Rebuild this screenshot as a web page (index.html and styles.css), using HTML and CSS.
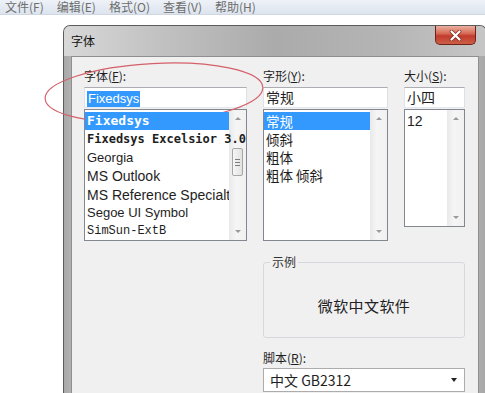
FILE: index.html
```html
<!DOCTYPE html>
<html lang="zh-CN">
<head>
    <meta charset="UTF-8">
    <meta name="viewport" content="width=device-width, initial-scale=1.0">
    <title>字体</title>
    <link rel="stylesheet" href="styles.css">
</head>
<body>
    <div class="menubar">
        <span>文件(F)</span>
        <span>编辑(E)</span>
        <span>格式(O)</span>
        <span>查看(V)</span>
        <span>帮助(H)</span>
    </div>

    <div class="editor">
        <div class="dialog">
            <div class="titlebar">
                <span class="title">字体</span>
                <button class="close">
                    <svg width="13" height="11" viewBox="0 0 13 11">
                        <path d="M2.5 1.5 L10.5 9.5 M10.5 1.5 L2.5 9.5" stroke="#7b2a1f" stroke-width="3.6" stroke-linecap="round"/>
                        <path d="M2.5 1.5 L10.5 9.5 M10.5 1.5 L2.5 9.5" stroke="#fff" stroke-width="2.2" stroke-linecap="round"/>
                    </svg>
                </button>
            </div>

            <div class="body">
                <div class="grid">
                    <label class="lbl">字体(<u>F</u>):</label>
                    <label class="lbl">字形(<u>Y</u>):</label>
                    <label class="lbl">大小(<u>S</u>):</label>

                    <div class="input"><span class="sel-text">Fixedsys</span></div>
                    <div class="input">常规</div>
                    <div class="input">小四</div>

                    <div class="list list-font">
                        <ul class="items">
                            <li class="sel f-fixed">Fixedsys</li>
                            <li class="f-excel">Fixedsys Excelsior 3.01</li>
                            <li class="f-sans f-small">Georgia</li>
                            <li class="f-sans">MS Outlook</li>
                            <li class="f-sans">MS Reference Specialty</li>
                            <li class="f-sans f-small">Segoe UI Symbol</li>
                            <li class="f-simsun">SimSun-ExtB</li>
                        </ul>
                        <div class="scroll">
                            <div class="btn"><i class="arr-up"></i></div>
                            <div class="track"><div class="thumb"><i class="grip"></i></div></div>
                            <div class="btn"><i class="arr-down"></i></div>
                        </div>
                    </div>

                    <div class="list list-style">
                        <ul class="items">
                            <li class="sel">常规</li>
                            <li>倾斜</li>
                            <li>粗体</li>
                            <li>粗体 倾斜</li>
                        </ul>
                        <div class="scroll">
                            <div class="btn"><i class="arr-up"></i></div>
                            <div class="track"></div>
                            <div class="btn"><i class="arr-down"></i></div>
                        </div>
                    </div>

                    <div class="list list-size">
                        <ul class="items">
                            <li class="f-sans">12</li>
                        </ul>
                        <div class="scroll">
                            <div class="btn"><i class="arr-up"></i></div>
                            <div class="track"></div>
                            <div class="btn"><i class="arr-down"></i></div>
                        </div>
                    </div>

                    <div class="lower">
                        <fieldset class="sample">
                            <legend>示例</legend>
                            <div class="sample-text">微软中文软件</div>
                        </fieldset>
                        <label class="lbl script-lbl">脚本(<u>R</u>):</label>
                        <div class="select">
                            <span>中文 GB2312</span>
                            <i class="arr-drop"></i>
                        </div>
                    </div>
                </div>
            </div>
        </div>
    </div>

    <!-- red hand-drawn mark around the font name box -->
    <svg class="annot" width="485" height="393" viewBox="0 0 485 393">
        <ellipse cx="154" cy="93" rx="109" ry="29.5" transform="rotate(-3 154 93)" fill="none" stroke="#d4606a" stroke-width="1.2"/>
    </svg>
</body>
</html>
```

FILE: styles.css
```css
body { margin: 0; width: 485px; height: 393px; overflow: hidden; position: relative; background: #fff; font-family: "Noto Sans CJK SC", sans-serif; font-size: 12px; color: #1e1e1e; }

.menubar { height: 15px; box-sizing: border-box; display: flex; gap: 13px; padding-left: 5px; overflow: hidden; border-bottom: 1px solid #cfd7e2; background: linear-gradient(#eef2f8, #dde4ee); color: #6d6d6d; font-size: 12px; line-height: 13px; }

.editor { padding: 10px 0 0 63px; }

.dialog { width: 422px; height: 370px; border: 1px solid #5c5c5c; border-bottom: none; border-radius: 7px 7px 0 0; background: linear-gradient(90deg, #a9a9a9, #b7b7b7 3%, #b3b3b3 97%, #a6a6a6); overflow: hidden; }

.titlebar { height: 30px; display: flex; justify-content: space-between; align-items: flex-start; padding: 0 10px 0 7px; background: linear-gradient(90deg, #d8d8d8 0%, #c2c2c2 22%, #ababab 50%, #b4b4b4 75%, #c6c6c6 100%); }
.title { padding-top: 8px; line-height: 13px; color: #111; }
.close { width: 41px; height: 19px; padding: 0; display: flex; align-items: center; justify-content: center; border: 1px solid #6f2318; border-top: none; border-radius: 0 0 5px 5px; background: linear-gradient(#eab0a0, #d66a55 42%, #c13b2b 55%, #cd5f47); }

.body { margin: 0 7px; height: 100%; background: #f0f0f0; border: 1px solid #8f8f8f; border-bottom: none; padding: 12px 0 0 12px; }

.grid { display: grid; grid-template-columns: 163px 125px 61px; column-gap: 16px; align-items: start; }

.lbl { display: block; line-height: 14px; color: #1e1e1e; }
.lbl u { text-underline-offset: 1px; }

.input { height: 21px; box-sizing: border-box; margin-top: 4px; padding: 1px 2px; background: #fff; border: 1px solid #abadb3; border-color: #abadb3 #dbdfe6 #e3e9ef #e2e3ea; font-size: 14px; line-height: 17px; }
.sel-text { display: inline-block; margin-top: 1px; padding: 0 1px; background: #3399ff; color: #fff; font-family: "Liberation Sans", sans-serif; font-size: 13px; line-height: 16px; }

.list { margin-top: 1px; height: 132px; box-sizing: border-box; display: flex; overflow: hidden; background: #fff; border: 1px solid #828790; }
.list-size { height: 118px; }

.items { flex: 1; min-width: 0; margin: 0; padding: 2px 0 0; list-style: none; position: relative; z-index: 1; }
.items li { height: 18.4px; line-height: 18px; padding-left: 2px; white-space: nowrap; overflow: hidden; font-size: 14px; color: #1e1e1e; }
.items li.sel { background: #3399ff; color: #fff; }
.list-style .items li { height: 18px; font-size: 13.5px; }

.f-fixed { font-family: "DejaVu Sans Mono", monospace; font-weight: bold; font-size: 13px !important; }
.f-excel { font-family: "DejaVu Sans Mono", monospace; font-weight: bold; font-size: 12px !important; overflow: visible !important; }
.f-sans { font-family: "Liberation Sans", sans-serif; }
.f-small { font-size: 13px !important; }
.f-simsun { font-family: "Liberation Mono", monospace; font-size: 12px !important; }

.scroll { width: 17px; flex: none; display: flex; flex-direction: column; background: linear-gradient(90deg, #e9e9e9, #f5f5f5 40%, #f1f1f1); }
.btn { height: 17px; display: flex; align-items: center; justify-content: center; }
.track { flex: 1; }
.thumb { width: 9px; height: 26px; margin: 21px auto 0; display: flex; align-items: center; justify-content: center; border: 1px solid #a6a6a6; border-radius: 2px; background: linear-gradient(90deg, #f6f6f6, #e2e2e2); }
.grip { width: 5px; height: 7px; background: repeating-linear-gradient(#7d7d7d 0 1px, transparent 1px 3px); }
.arr-up { width: 0; height: 0; border: 3px solid transparent; border-top: none; border-bottom: 3px solid #9a9a9a; }
.arr-down { width: 0; height: 0; border: 3px solid transparent; border-bottom: none; border-top: 3px solid #9a9a9a; }

.lower { grid-column: 2 / 4; margin-top: 14px; }
.sample { margin: 0; padding: 0; border: 1px solid #d5d9de; border-radius: 3px; }
.sample legend { margin-left: 6px; padding: 0 2px; line-height: 14px; color: #333; }
.sample-text { height: 68px; box-sizing: border-box; padding-top: 4px; display: flex; align-items: center; justify-content: center; font-size: 15px; letter-spacing: 0.4px; color: #222; }

.script-lbl { margin-top: 13px; }
.select { margin-top: 3px; height: 24px; box-sizing: border-box; display: flex; align-items: center; justify-content: space-between; padding: 0 7px 0 6px; background: #fff; border: 1px solid #acacac; font-size: 14px; }
.select span { font-family: "Noto Sans CJK SC", sans-serif; }
.arr-drop { width: 0; height: 0; border: 3.5px solid transparent; border-bottom: none; border-top: 4px solid #222; }

.annot { position: absolute; left: 0; top: 0; pointer-events: none; }
```
